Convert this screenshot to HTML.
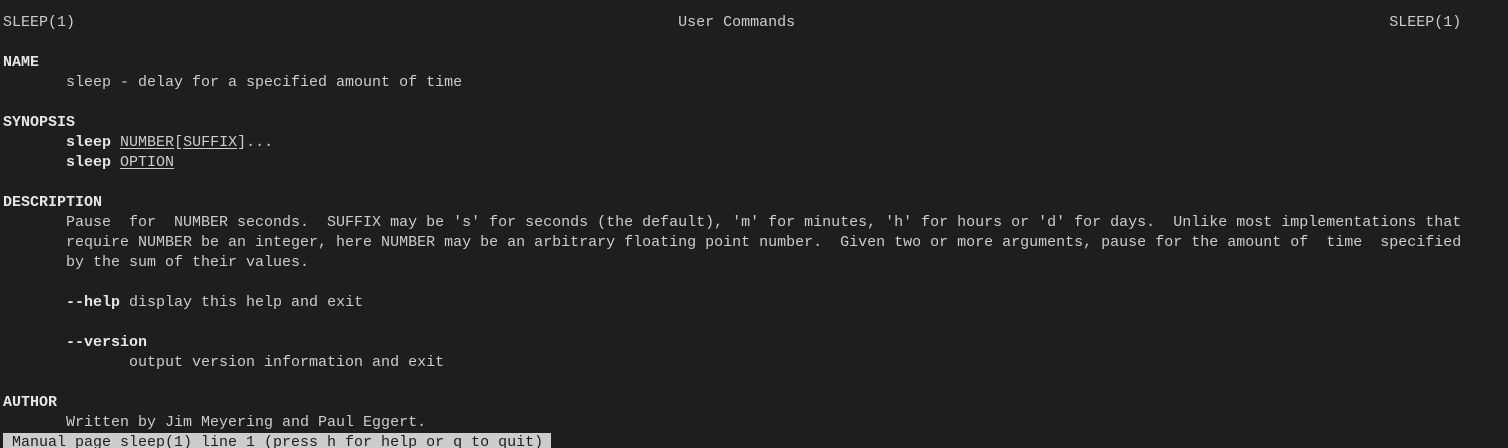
<!DOCTYPE html>
<html><head><meta charset="utf-8"><style>
html,body{margin:0;padding:0;background:#1e1e1e;width:1508px;height:448px;overflow:hidden}
pre{margin:0;padding:13px 0 0 3px;font-family:"Liberation Mono",monospace;font-size:15px;line-height:20px;color:#cccccc;white-space:pre}
b{color:#e6e6e6}
u{text-decoration:underline;text-underline-offset:2px}
.st{background:#cccccc;color:#1e1e1e;display:inline-block;padding-right:8px;height:20px}
</style></head><body><pre>SLEEP(1)                                                                   User Commands                                                                  SLEEP(1)

<b>NAME</b>
       sleep - delay for a specified amount of time

<b>SYNOPSIS</b>
       <b>sleep</b> <u>NUMBER</u>[<u>SUFFIX</u>]...
       <b>sleep</b> <u>OPTION</u>

<b>DESCRIPTION</b>
       Pause  for  NUMBER seconds.  SUFFIX may be 's' for seconds (the default), 'm' for minutes, 'h' for hours or 'd' for days.  Unlike most implementations that
       require NUMBER be an integer, here NUMBER may be an arbitrary floating point number.  Given two or more arguments, pause for the amount of  time  specified
       by the sum of their values.

       <b>--help</b> display this help and exit

       <b>--version</b>
              output version information and exit

<b>AUTHOR</b>
       Written by Jim Meyering and Paul Eggert.
<span class="st"> Manual page sleep(1) line 1 (press h for help or q to quit)</span></pre></body></html>
